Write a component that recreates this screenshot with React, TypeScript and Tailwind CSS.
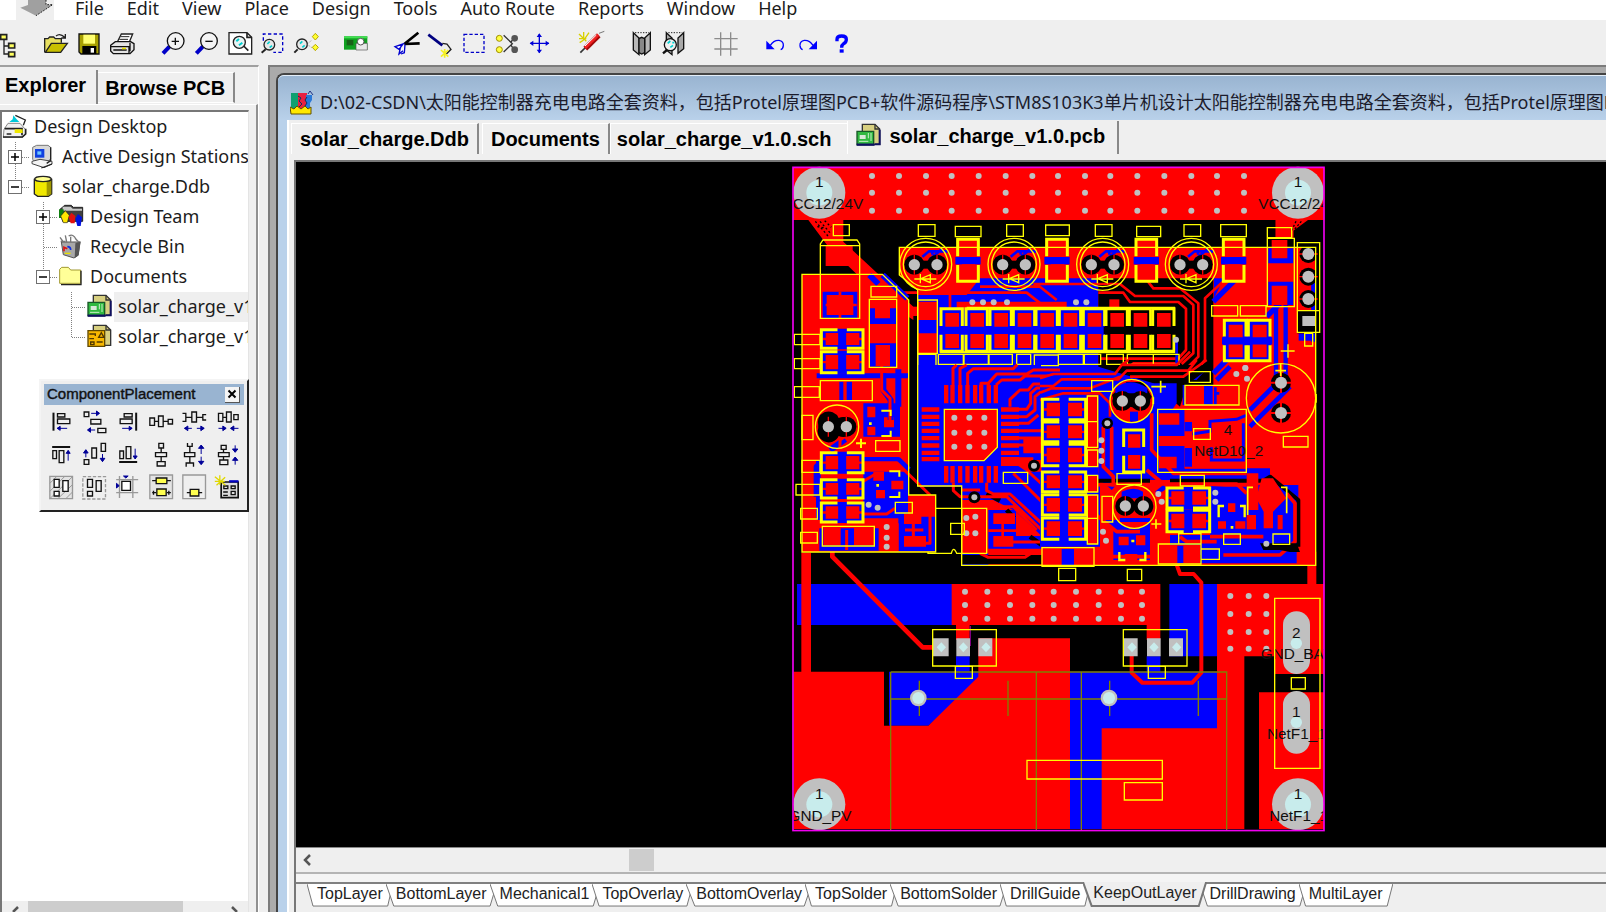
import type { ReactNode } from "react";

const RED = "#ff0000";
const BLUE = "#0000ff";
const YEL = "#ffff00";
const PAD = "#c0c0c0";
const HOLE = "#c8ecec";

const uiFont = "font-['Noto_Sans','Noto_Sans_CJK_SC',sans-serif]";
const boldFont = "font-['Liberation_Sans',Arial,sans-serif] font-bold";

/* ---------- menu + toolbar ---------- */

const menus = ["File", "Edit", "View", "Place", "Design", "Tools", "Auto Route", "Reports", "Window", "Help"];

const MenuBar = () => (
  <nav className={`flex h-5 shrink-0 items-start bg-white ${uiFont} text-[18px] leading-4 text-[#1c1c1c]`}>
    <div className="ml-4 h-5 w-[38px] bg-[#efefef]">
      <svg viewBox="48 0 114 60" className="h-5 w-[38px]">
        <path d="M84 0h54v14h20l-50 33-47-24 23-8z" fill="#a0a0a0" />
        <path d="M138 0v14h20l-50 33" fill="none" stroke="#222" strokeWidth="3" strokeDasharray="5 4" />
      </svg>
    </div>
    <div className="ml-2.5 flex gap-px">
      {menus.map((m) => (
        <button key={m} className="px-[11px] whitespace-nowrap">
          {m}
        </button>
      ))}
    </div>
  </nav>
);

type Tool = { name: string; box: string; art: ReactNode };

const lens = (cx: number, cy: number) => (
  <>
    <path d={`M${cx - 18} ${cy + 16}l-20 21`} stroke="#0000c8" strokeWidth="12" />
    <circle cx={cx} cy={cy} r="25" fill="#f4f4f4" stroke="#111" strokeWidth="4" />
  </>
);

const toolGroups: Tool[][] = [
  [
    {
      name: "Open",
      box: "117 84 99 90",
      art: (
        <>
          <path d="M134 156v-40h10l5-5h12l5 5h18v12" fill="#e8e060" stroke="#222" strokeWidth="4" />
          <path d="M136 157l18-27h48l-20 27z" fill="#c8c000" stroke="#222" strokeWidth="4" />
          <path d="M168 108q12-10 26 4m2-10v12h-12" fill="none" stroke="#222" strokeWidth="4" />
        </>
      ),
    },
    {
      name: "Save",
      box: "216 84 99 90",
      art: (
        <>
          <path d="M237 102h60v60h-54l-6-6z" fill="#a8a000" stroke="#111" strokeWidth="4" />
          <path d="M250 104h35v27h-35z" fill="#ffff70" />
          <path d="M247 138h42v24h-42z" fill="#000" />
          <path d="M272 144h10v14h-10z" fill="#fff" />
        </>
      ),
    },
    {
      name: "Print",
      box: "315 84 99 90",
      art: (
        <>
          <path d="M352 126l12-24h34l-10 24z" fill="#fff" stroke="#222" strokeWidth="4" />
          <path d="M362 110h26M358 118h26" stroke="#222" strokeWidth="3" />
          <path d="M332 136l14-11h46l10 6v18l-12 12h-50l-8-8z" fill="#e4e4e4" stroke="#111" strokeWidth="4" />
          <path d="M333 140h54v20M340 150h40M390 128v26" fill="none" stroke="#111" strokeWidth="4" />
          <path d="M366 143h12v5h-12z" fill="#e8e000" />
        </>
      ),
    },
  ],
  [
    { name: "Zoom In", box: "465 84 99 90", art: <>{lens(524, 123)}<path d="M512 124h22M523 113v22" stroke="#111" strokeWidth="4" /></> },
    { name: "Zoom Out", box: "564 84 99 90", art: <>{lens(624, 123)}<path d="M613 124h22" stroke="#111" strokeWidth="4" /></> },
    {
      name: "Fit Document",
      box: "663 84 99 90",
      art: (
        <>
          <path d="M684 98h54l14 14v50h-68z" fill="#fff" stroke="#222" strokeWidth="4" />
          <path d="M738 98v14h14M728 138l14 14" fill="none" stroke="#222" strokeWidth="5" />
          <circle cx="715" cy="127" r="18" fill="#e8f4f4" stroke="#222" strokeWidth="4" />
          <path d="M706 124l8-7M714 136l10-8" stroke="#00d0d0" strokeWidth="6" />
        </>
      ),
    },
    {
      name: "Zoom Area",
      box: "762 84 99 90",
      art: (
        <>
          <path d="M787 122v-20h58v55h-28" fill="none" stroke="#0000c8" strokeWidth="4" strokeDasharray="10 7" />
          <path d="M794 148l-12 10" stroke="#222" strokeWidth="6" />
          <circle cx="805" cy="134" r="16" fill="#e8e8e8" stroke="#222" strokeWidth="4" />
          <path d="M799 132l7-7M806 143l7-6" stroke="#00d0d0" strokeWidth="5" />
        </>
      ),
    },
    {
      name: "Zoom Point",
      box: "861 84 99 90",
      art: (
        <>
          <path d="M890 148l-10 10" stroke="#222" strokeWidth="6" />
          <circle cx="903" cy="133" r="16" fill="#e8e8e8" stroke="#222" strokeWidth="4" />
          <path d="M897 131l7-7M904 142l7-6" stroke="#00d0d0" strokeWidth="5" />
          <path d="M918 134l14-14M920 134l14 10" stroke="#777" strokeWidth="2" strokeDasharray="3 3" />
          <path d="M943 100l9 10-9 10-9-10zM943 133l9 9-9 10-9-10z" fill="#ffff30" stroke="#b8a800" strokeWidth="3" />
        </>
      ),
    },
  ],
  [
    {
      name: "Browse Board",
      box: "1017 84 99 90",
      art: (
        <>
          <path d="M1032 109h70v40h-70z" fill="#10a020" />
          <path d="M1032 109h70v6h-70z" fill="#40e050" />
          <path d="M1040 120h20v16h-20z" fill="#186018" />
          <path d="M1068 130h34v20h-34z" fill="#e8e8e8" stroke="#555" strokeWidth="2" />
          <circle cx="1082" cy="125" r="10" fill="#fff" stroke="#555" strokeWidth="3" />
        </>
      ),
    },
  ],
  [
    {
      name: "Cut",
      box: "1167 84 99 90",
      art: (
        <>
          <path d="M1252 98l-42 34M1256 130l-46 2" stroke="#000" strokeWidth="8" />
          <path d="M1206 132l-24 8 12 8zM1198 144l-4 18 12-10M1212 134l-2 24-10 4" fill="#fff" stroke="#0000d0" strokeWidth="4" />
        </>
      ),
    },
    {
      name: "Knife",
      box: "-24 84 99 90",
      art: (
        <>
          <path d="M-8 104l42 32" stroke="#000080" strokeWidth="8" />
          <path d="M34 130l14 2 12 16-14 14" fill="none" stroke="#222" strokeWidth="4" />
          <path d="M30 150l22 20M52 150l-22 20M41 147v26" stroke="#f4f020" strokeWidth="5" />
        </>
      ),
    },
    { name: "Select Area", box: "75 84 99 90", art: <path d="M99 103h60v54h-60z" fill="none" stroke="#0000c8" strokeWidth="4" strokeDasharray="10 6" /> },
    {
      name: "Deselect",
      box: "174 84 99 90",
      art: (
        <>
          <path d="M218 106l26 25-26 25M252 110l-12 16M252 152l-12-16" fill="none" stroke="#333" strokeWidth="4" />
          <circle cx="205" cy="115" r="9" fill="#ffff40" stroke="#a09000" strokeWidth="3" />
          <circle cx="205" cy="149" r="9" fill="#ffff40" stroke="#a09000" strokeWidth="3" />
          <circle cx="251" cy="115" r="10" fill="#555" />
          <circle cx="251" cy="149" r="10" fill="#555" />
        </>
      ),
    },
    {
      name: "Move",
      box: "273 84 99 90",
      art: (
        <>
          <path d="M298 130h56M325 102v56" stroke="#0000d8" strokeWidth="4" />
          <path d="M296 130l11-8v16zM355 130l-11-8v16zM325 100l8 11h-16zM325 160l8-11h-16z" fill="#0000d8" />
        </>
      ),
    },
  ],
  [
    {
      name: "Wizard",
      box: "426 84 99 90",
      art: (
        <>
          <path d="M448 158l20-20" stroke="#333" strokeWidth="5" />
          <path d="M463 146l40-40" stroke="#a00808" strokeWidth="16" />
          <path d="M462 144l40-40" stroke="#f02020" strokeWidth="9" />
          <path d="M462 138l34-33" stroke="#fff" strokeWidth="3" />
          <path d="M444 102l22 22M458 96v24M444 116h22M474 98l-14 20M446 128l12-8" stroke="#d8d000" strokeWidth="4" />
          <path d="M504 100l16-6" stroke="#777" strokeWidth="3" />
        </>
      ),
    },
  ],
  [
    {
      name: "Library",
      box: "579 84 99 90",
      art: (
        <>
          <path d="M607 98l17 16v50l-17-14zM658 98l-17 16v50l17-14z" fill="#b8b8b8" stroke="#111" strokeWidth="4" />
          <path d="M624 116l8-4 9 4v42l-9 4-8-4z" fill="#888" stroke="#111" strokeWidth="4" />
          <path d="M612 98h42" stroke="#222" strokeWidth="3" strokeDasharray="4 4" />
        </>
      ),
    },
    {
      name: "Browse Library",
      box: "678 84 99 90",
      art: (
        <>
          <path d="M706 98l17 16v50l-17-14zM758 98l-17 16v46l17-14z" fill="#a8a8a8" stroke="#111" strokeWidth="4" />
          <path d="M708 150l-12 10" stroke="#111" strokeWidth="7" />
          <circle cx="718" cy="134" r="18" fill="#f0f0f0" stroke="#111" strokeWidth="4" />
          <path d="M710 130l8-7M718 142l8-6M724 128h6" stroke="#00d0d0" strokeWidth="5" />
          <path d="M712 98h42" stroke="#222" strokeWidth="3" strokeDasharray="4 4" />
        </>
      ),
    },
  ],
  [{ name: "Snap Grid", box: "831 84 99 90", art: <path d="M850 116h70M850 147h70M869 97v70M899 97v70" stroke="#8c8c8c" strokeWidth="4" /> }],
  [
    {
      name: "Undo",
      box: "990 84 99 90",
      art: (
        <>
          <path d="M1024 136q10-16 26-15 14 2 13 16-1 10-8 12" fill="none" stroke="#0000ff" strokeWidth="4" />
          <path d="M1012 122v26h25z" fill="#0000ff" />
        </>
      ),
    },
    {
      name: "Redo",
      box: "1089 84 99 90",
      art: (
        <>
          <path d="M1152 136q-10-16-26-15-14 2-13 16 1 10 8 12" fill="none" stroke="#0000ff" strokeWidth="4" />
          <path d="M1164 122v26h-25z" fill="#0000ff" />
        </>
      ),
    },
    {
      name: "Help",
      box: "1188 84 99 90",
      art: (
        <>
          <path d="M1224 124v-6q0-10 14-10t14 10-8 13q-6 4-6 12" fill="none" stroke="#0000ff" strokeWidth="10" />
          <path d="M1232 148h12v10h-12z" fill="#0000ff" />
        </>
      ),
    },
  ],
];

const ToolBar = () => (
  <div className="flex h-[45px] shrink-0 items-center gap-[18px] bg-[#efefef]">
    <button aria-label="Design Manager" className="-mr-1">
      <svg viewBox="0 84 75 90" className="h-[30px] w-[25px]">
        <path d="M12 118v44h14M12 138h14" fill="none" stroke="#222" strokeWidth="4" />
        <path d="M2 104h18v14h-18zM26 130h18v14h-18zM26 156h18v14h-18z" fill="#ffff60" stroke="#222" strokeWidth="5" />
      </svg>
    </button>
    {toolGroups.map((g) => (
      <div key={g[0].name} className="flex">
        {g.map((t) => (
          <button key={t.name} aria-label={t.name} title={t.name}>
            <svg viewBox={t.box} className="h-[30px] w-[33px]">{t.art}</svg>
          </button>
        ))}
      </div>
    ))}
  </div>
);

/* ---------- explorer ---------- */

const PcbDoc = () => (
  <svg viewBox="258 696 84 90" className="h-[30px] w-7">
    <path d="M280 706h38l14 14v46h-52z" fill="#d8d080" stroke="#333" strokeWidth="4" />
    <path d="M318 706v14h14" fill="none" stroke="#333" strokeWidth="4" />
    <path d="M332 722v44h-14" fill="none" stroke="#101060" strokeWidth="6" />
    <path d="M264 727h50v40h-50z" fill="#30b840" stroke="#185828" strokeWidth="4" />
    <path d="M272 738h18v12h-18z" fill="#d8e8d8" />
    <path d="M298 732v16M306 732v24M270 757h28" fill="none" stroke="#c8f0c8" strokeWidth="3" />
    <path d="M263 767h54" stroke="#101060" strokeWidth="7" />
  </svg>
);

const SchDoc = () => (
  <svg viewBox="258 786 84 90" className="h-[30px] w-7">
    <path d="M280 796h38l14 14v46h-52z" fill="#d8d080" stroke="#333" strokeWidth="4" />
    <path d="M318 796v14h14" fill="none" stroke="#333" strokeWidth="4" />
    <path d="M264 812h50v47h-50z" fill="#f8b800" stroke="#604800" strokeWidth="4" />
    <path d="M268 822h18v6M268 836h14M296 832l8-14 8 14zM272 846h10v8h-10zM290 846h18" fill="none" stroke="#503800" strokeWidth="4" />
  </svg>
);

const DesktopIcon = () => (
  <svg viewBox="6 156 84 90" className="h-[30px] w-7">
    <path d="M12 208l12-18h36l16 18v16l-8 8H10z" fill="#f0f0f0" stroke="#888" strokeWidth="3" />
    <path d="M9 231h58l10-9v-16M14 206h52v20M20 222h14" fill="none" stroke="#222" strokeWidth="5" />
    <path d="M44 208h24v11h-24z" fill="#f0e800" />
    <path d="M28 186l10-8 2-12 10 12 8 8z" fill="#00c8d8" />
    <path d="M46 166l30 14-6 16" fill="none" stroke="#222" strokeWidth="4" />
  </svg>
);

const StationIcon = () => (
  <svg viewBox="90 246 84 90" className="h-[30px] w-7">
    <path d="M98 262l12-6h34l8 6v34l-10 10h-36l-8-8z" fill="#d8d8d8" stroke="#777" strokeWidth="3" />
    <path d="M105 267h28v26h-28z" fill="#1040e0" />
    <path d="M112 274h12v10h-12z" fill="#70c8ff" />
    <path d="M96 304l24-6 36 6v8l-24 11-36-12z" fill="#f4f4f4" stroke="#444" strokeWidth="3" />
    <path d="M152 262v40l-12 8M124 324l32-12" fill="none" stroke="#222" strokeWidth="4" />
  </svg>
);

const DbIcon = () => (
  <svg viewBox="90 336 84 90" className="h-[30px] w-7">
    <path d="M103 358v44l10 7h32l10-7v-44z" fill="#f0e800" stroke="#222" strokeWidth="4" />
    <path d="M140 360h14v42l-10 6h-4z" fill="#a09800" />
    <ellipse cx="129" cy="357" rx="25" ry="8" fill="#ffff90" stroke="#222" strokeWidth="4" />
  </svg>
);

const TeamIcon = () => (
  <svg viewBox="174 426 84 90" className="h-[30px] w-7">
    <path d="M180 448l14-12h20l6 6h28v42h-60z" fill="#404040" stroke="#222" strokeWidth="3" />
    <path d="M188 440h24l6 6h28v6h-58z" fill="#c8c8c8" />
    <path d="M177 448h14v26h-14z" fill="#108010" />
    <path d="M182 468l14-16 12 14-6 22h-12z" fill="#ffe800" stroke="#222" strokeWidth="2" />
    <path d="M206 472l8-14 12 10-2 22h-12z" fill="#e01010" />
    <path d="M226 476l8-14 12 10-4 26h-10z" fill="#0010e0" />
  </svg>
);

const BinIcon = () => (
  <svg viewBox="174 516 84 90" className="h-[30px] w-7">
    <path d="M184 546h56l-6 40-12 8-32-10z" fill="#a8a8a8" stroke="#555" strokeWidth="3" />
    <path d="M226 550l16-6-6 42-12 8z" fill="#555" />
    <path d="M180 532l10 14M196 526l4 20M206 528q14-8 22 10l8 8M212 530v16M182 544h14" stroke="#777" strokeWidth="4" fill="#f4f4f4" />
    <path d="M192 574v-12l10 4" fill="none" stroke="#e01010" strokeWidth="5" />
    <path d="M202 560q10 0 10 10" fill="none" stroke="#1030e0" strokeWidth="5" />
    <path d="M194 580h18" stroke="#e8e000" strokeWidth="4" />
  </svg>
);

const FolderIcon = () => (
  <svg viewBox="174 606 84 90" className="h-[30px] w-7">
    <path d="M179 670v-42l6-6h20l7 8h30v40z" fill="#ffff98" stroke="#a09830" strokeWidth="3" />
    <path d="M183 674h60v-42" fill="none" stroke="#222" strokeWidth="4" />
  </svg>
);

type Line = "none" | "through" | "end";
type Node = { label: string; cells: Line[]; open?: boolean; icon: ReactNode; selected?: boolean };

const nodes: Node[] = [
  { label: "Design Desktop", cells: [], icon: <DesktopIcon /> },
  { label: "Active Design Stations", cells: ["through"], open: false, icon: <StationIcon /> },
  { label: "solar_charge.Ddb", cells: ["end"], open: true, icon: <DbIcon /> },
  { label: "Design Team", cells: ["none", "through"], open: false, icon: <TeamIcon /> },
  { label: "Recycle Bin", cells: ["none", "through"], icon: <BinIcon /> },
  { label: "Documents", cells: ["none", "end"], open: true, icon: <FolderIcon /> },
  { label: "solar_charge_v1.0.pcb", cells: ["none", "none", "through"], icon: <PcbDoc />, selected: true },
  { label: "solar_charge_v1.0.sch", cells: ["none", "none", "end"], icon: <SchDoc /> },
];

const TreeRow = ({ node }: { node: Node }) => (
  <li className="flex h-[30px] items-center">
    {node.cells.map((line, i) => {
      const last = i === node.cells.length - 1;
      return (
        <span key={i} className="relative flex h-[30px] w-7 shrink-0 items-center pl-1.5">
          {line !== "none" && (
            <svg viewBox="0 0 28 30" className="absolute inset-0 h-[30px] w-7">
              <path
                d={line === "through" ? "M13.5 0V30M14 15.500H28" : "M13.5 0V15M14 15.500H28"}
                fill="none"
                stroke="#808080"
                strokeDasharray="1 1"
              />
            </svg>
          )}
          {last && node.open !== undefined && (
            <button
              aria-label={node.open ? "Collapse" : "Expand"}
              className="relative size-[14px] border border-[#707070] bg-white"
            >
              <svg viewBox="0 0 12 12" className="size-3">
                <path d={node.open ? "M2 6h8" : "M2 6h8M6 2v8"} stroke="#000" strokeWidth="1.500" />
              </svg>
            </button>
          )}
        </span>
      );
    })}
    <span className="shrink-0">{node.icon}</span>
    <span className={`h-[30px] grow overflow-hidden whitespace-nowrap pl-1 leading-[28px] ${node.selected ? "bg-[#efefef]" : ""}`}>
      {node.label}
    </span>
  </li>
);

/* component placement palette, 6 x 3 */
const K = { fill: "none", stroke: "#111", strokeWidth: 4 };
const A = { fill: "#000098", stroke: "#000098", strokeWidth: 3 };

const placement: [string, ReactNode][] = [
  ["Align Left", <><path d="M163 164v54" stroke="#111" strokeWidth="6" /><path {...K} d="M175 167h22v10h-22zM175 183h37v14h-37z" /><path {...A} d="M174 211h30M174 211l9-6v12z" /></>],
  ["Center Horizontal", <><path {...K} d="M255 162h14v14h-14zM275 184h30v14h-30zM296 211h24v13h-24z" /><path {...A} d="M276 166h24M301 166l-9-7v14zM266 216h22M265 216l9-7v14z" /></>],
  ["Align Right", <><path d="M408 164v54" stroke="#111" strokeWidth="6" /><path {...K} d="M372 167h24v10h-24zM360 183h36v14h-36z" /><path {...A} d="M366 211h28M396 211l-9-6v12z" /></>],
  ["Space Horizontal", <path key="a" {...K} d="M449 180h14v22h-14zM475 174h14v32h-14zM504 184h13v14h-13zM463 190h12M489 190h15" />],
  ["Increase Horizontal", <><path {...K} d="M547 166h10v24h-10M575 162h14v30h-14zM618 170h-10v16h10M557 178h18M589 178h19" /><path {...A} d="M553 211h22M553 211l10-7v14zM590 211h22M612 211l-10-7v14z" /></>],
  ["Decrease Horizontal", <><path {...K} d="M652 166h13v24h-13zM676 162h14v30h-14zM698 170h13v15h-13zM665 178h11" /><path {...A} d="M652 211h22M675 211l-10-7v14zM690 211h22M688 211l10-7v14z" /></>],
  ["Align Top", <><path d="M159 267h54" stroke="#111" strokeWidth="6" /><path {...K} d="M161 278h11v24h-11zM180 278h14v36h-14z" /><path {...A} d="M207 308v-28M207 277l-6 9h12z" /></>],
  ["Center Vertical", <><path {...K} d="M255 305h14v14h-14zM278 270h14v30h-14zM306 256h13v24h-13z" /><path {...A} d="M260 298v-22M260 275l-7 10h14zM310 288v22M310 311l-7-10h14z" /></>],
  ["Align Bottom", <><path d="M357 312h54" stroke="#111" strokeWidth="6" /><path {...K} d="M359 279h11v23h-11zM378 266h14v36h-14z" /><path {...A} d="M405 272v28M405 303l-6-9h12z" /></>],
  ["Space Vertical", <path key="a" {...K} d="M476 256h14v14h-14zM466 284h33v12h-33zM471 311h24v13h-24zM483 270v14M483 296v15" />],
  ["Increase Vertical", <><path {...K} d="M562 255v10h14v-10M553 284h31v12h-31zM558 326v-11h22v11M569 265v19M569 296v19" /><path {...A} d="M603 288v-24M603 261l-8 10h16zM603 296v22M603 320l-8-10h16z" /></>],
  ["Decrease Vertical", <><path {...K} d="M660 262h15v12h-15zM652 284h32v12h-32zM656 306h24v14h-24zM667 274v10M667 296v10" /><path {...A} d="M702 262v18M702 283l-8-10h16zM702 320v-20M702 297l-8 10h16z" /></>],
  ["Arrange Within Room", <><path d="M152 355h68v67h-68z" fill="#e4e4e4" stroke="#999" strokeWidth="4" /><path d="M152 376l20-20M152 400l44-44M152 422l68-66M176 422l44-42M200 422l20-20" stroke="#999" strokeWidth="3" /><path {...K} fill="#fff" d="M165 364h15v24h-15zM191 368h16v32h-16zM165 400h15v14h-15z" /></>],
  ["Arrange Within Rectangle", <><path d="M251 356h68v67h-68z" fill="none" stroke="#999" strokeWidth="4" strokeDasharray="10 5" /><path {...K} d="M265 364h15v24h-15zM291 368h15v32h-15zM265 400h15v14h-15z" /></>],
  ["Move To Grid", <><path d="M348 365h66M348 404h66M358 354v66M398 354v66" stroke="#999" strokeWidth="4" /><path {...K} fill="#fff" d="M365 370h26v27h-26z" /><path {...A} d="M370 354h14l-7 6zM349 376v14l8-7z" /></>],
  ["Create Union", <><path d="M449 351h68v71h-68z" fill="#e4e4e4" stroke="#999" strokeWidth="4" /><path d="M456 368h12M500 368h12M456 404h12M500 404h12M460 398v12M506 398v12" stroke="#111" strokeWidth="4" /><path d="M468 360h32v17h-32zM470 393h28v20h-28z" fill="#ffff50" stroke="#111" strokeWidth="4" /></>],
  ["Break Union", <><path d="M548 351h68v71h-68z" fill="#efefef" stroke="#999" strokeWidth="4" /><path d="M560 404h12M594 404h12" stroke="#111" strokeWidth="4" /><path d="M570 394h26v20h-26z" fill="#ffff50" stroke="#111" strokeWidth="4" /></>],
  ["Alignment Options", <><path d="M660 372h51v47h-51z" fill="#ddd" stroke="#111" strokeWidth="5" /><path d="M684 370h28" stroke="#0000c0" strokeWidth="7" /><path {...K} d="M668 384h12v8h-12zM690 384h12v8h-12zM690 400h12v10h-12zM666 402h14M666 412h14" /><path d="M641 356l32 26M656 352v28M641 370h30M672 358l-26 24" stroke="#e0d800" strokeWidth="4" /></>],
];

const PlacementPalette = () => (
  <div className="absolute top-[312px] left-[39px] w-[210px] border-2 border-t-[#f4f4f4] border-r-[#222] border-b-[#222] border-l-[#f4f4f4] bg-[#efefef] p-[3px] pb-1.5">
    <div className="flex h-[21px] items-center justify-between bg-[#99b4d1] pr-1 pl-[3px] font-['Liberation_Sans',Arial,sans-serif] text-[15px] text-[#111] [-webkit-text-stroke:0.4px_#111]">
      <span>ComponentPlacement</span>
      <button aria-label="Close" className="flex h-4 w-[15px] items-center justify-center border-r border-b border-[#555] bg-[#f4f4f4]">
        <svg viewBox="0 0 10 10" className="size-[10px]">
          <path d="M1.500 1.500l7 7M8.500 1.500l-7 7" stroke="#000" strokeWidth="2" />
        </svg>
      </button>
    </div>
    <div className="grid grid-cols-6">
      {placement.map(([name, art], i) => (
        <button key={name} aria-label={name} title={name}>
          <svg viewBox={`${135 + 99 * (i % 6)} ${141 + 99 * Math.floor(i / 6)} 99 99`} className="h-[33px] w-full">
            {art}
          </svg>
        </button>
      ))}
    </div>
  </div>
);

const Explorer = () => (
  <aside className="relative flex w-[259px] shrink-0 flex-col border-t-2 border-r border-t-[#a0a0a0] border-r-white bg-[#efefef]">
    <div className={`flex h-[37px] items-start pt-[3px] text-[20px] ${boldFont}`}>
      <button className="h-[34px] border-r-2 border-[#888] pr-2.5 pl-[5px] pb-1">Explorer</button>
      <button className="mt-0.5 h-[31px] border-t border-r-2 border-b border-t-white border-r-[#888] border-b-white pr-2 pl-[7px]">Browse PCB</button>
    </div>
    <div className="flex min-h-0 grow flex-col border-t border-r-2 border-t-white border-r-[#909090] pt-[5px] pr-[7px]">
      <div className="flex min-h-0 grow flex-col overflow-hidden border-t-2 border-r border-l-2 border-t-[#777] border-r-[#e4e4e4] border-l-[#777] bg-white">
        <ul className={`grow ${uiFont} text-[18px] text-[#1c1c1c]`}>
          {nodes.map((n) => (
            <TreeRow key={n.label} node={n} />
          ))}
        </ul>
        <div className="flex h-[11px] shrink-0 items-start justify-between bg-[#efefef] px-[7px]">
          <svg viewBox="0 0 10 11" className="h-[11px] w-[10px]"><path d="M9 6L4 11" stroke="#555" strokeWidth="2.500" /></svg>
          <div className="mr-[48px] ml-[9px] h-[11px] grow bg-[#cdcdcd]" />
          <svg viewBox="0 0 10 11" className="h-[11px] w-[10px]"><path d="M1 6l5 5" stroke="#555" strokeWidth="2.500" /></svg>
        </div>
      </div>
    </div>
    <PlacementPalette />
  </aside>
);

/* ---------- board drawing, 3 units to a screen pixel ---------- */

type Box = [number, number, number, number]; // x1 y1 x2 y2

const Boxes = ({ list, fill = "none", stroke = "none", sw = 4 }: { list: Box[]; fill?: string; stroke?: string; sw?: number }) => (
  <path
    d={list.map(([a, b, c, d]) => `M${a} ${b}H${c}V${d}H${a}z`).join("")}
    fill={fill}
    stroke={stroke}
    strokeWidth={sw}
  />
);

const Traces = ({ d, color = RED, w = 9 }: { d: string; color?: string; w?: number }) => (
  <path d={d} fill="none" stroke={color} strokeWidth={w} strokeLinejoin="round" />
);

const Dots = ({ xs, ys, r = 9 }: { xs: number[]; ys: number[]; r?: number }) => (
  <>
    {ys.flatMap((y) => xs.map((x) => <circle key={`${x}-${y}`} cx={x} cy={y} r={r} fill={PAD} />))}
  </>
);

const Vias = ({ pts }: { pts: [number, number][] }) => (
  <>{pts.map(([x, y]) => <circle key={`${x}-${y}`} cx={x} cy={y} r="9" fill={PAD} />)}</>
);

// chip resistor with its pads one above the other
const VChip = ({ b: [x1, y1, x2, y2], bg = BLUE, mid = BLUE }: { b: Box; bg?: string; mid?: string }) => {
  const m = (y1 + y2) / 2;
  return (
    <>
      <Boxes list={[[x1, y1, x2, y2]]} fill={bg} />
      <Boxes list={[[x1 - 4, m - 10, x2 + 4, m + 12]]} fill={mid} />
      <Boxes list={[[x1 + 16, y1 + 16, x2 - 13, m - 10], [x1 + 16, m + 12, x2 - 13, y2 - 13]]} fill={RED} />
      <path
        d={`M${x1 + 3} ${m - 12}V${y1 + 3}H${x2 - 3}V${m - 12}M${x1 + 3} ${m + 14}V${y2 - 3}H${x2 - 3}V${m + 14}`}
        fill="none"
        stroke={YEL}
        strokeWidth="9"
      />
    </>
  );
};

// chip resistor with its pads side by side
const HChip = ({ b: [x1, y1, x2, y2] }: { b: Box }) => {
  const m = (x1 + x2) / 2;
  return (
    <>
      <Boxes list={[[x1, y1, x2, y2]]} fill={BLUE} />
      <Boxes list={[[x1 + 16, y1 + 13, m - 12, y2 - 13], [m + 12, y1 + 13, x2 - 14, y2 - 13]]} fill={RED} />
      <Boxes list={[[x1 + 8, m, x1 + 8, m]]} />
      <path d={`M${x1 + 8} ${(y1 + y2) / 2}h14M${x2 - 22} ${(y1 + y2) / 2}h16`} stroke={RED} strokeWidth="7" />
      <path
        d={`M${m - 14} ${y1 + 3}H${x1 + 3}V${y2 - 3}H${m - 14}M${m + 14} ${y1 + 3}H${x2 - 3}V${y2 - 3}H${m + 14}`}
        fill="none"
        stroke={YEL}
        strokeWidth="9"
      />
    </>
  );
};

const PinPair = ({ x, y, d, r = 17 }: { x: number; y: number; d: number; r?: number }) => (
  <>
    <path d={`M${x - d} ${y}H${x + d}`} stroke="#000" strokeWidth="24" />
    {[x - d, x + d].map((cx) => (
      <g key={cx}>
        <circle cx={cx} cy={y} r={r + 13} fill="#000" />
        <path d={`M${cx} ${y - 30}v60`} stroke={RED} strokeWidth="4" />
        <circle cx={cx} cy={y} r={r} fill={PAD} />
      </g>
    ))}
  </>
);

const Led = ({ x }: { x: number }) => (
  <>
    <path d={`M${x - 10} 290l20-16h56M${x + 20} 284v-10M${x + 10} 300l40-34`} fill="none" stroke={BLUE} strokeWidth="8" />
    <PinPair x={x} y={314} d={34} />
    <circle cx={x} cy="313" r="78" fill="none" stroke={YEL} strokeWidth="4" />
    <circle cx={x} cy="313" r="67" fill="none" stroke={YEL} strokeWidth="4" />
    <path d={`M${x - 34} 357h66M${x - 16} 342v28M${x - 14} 356l28-12v24z`} fill="none" stroke={YEL} strokeWidth="4" />
    <Boxes list={[[x - 22, 194, x + 28, 229]]} stroke={YEL} />
  </>
);

const MountPad = ({ x, y, net, shift = 2 }: { x: number; y: number; net: string; shift?: number }) => (
  <>
    <circle cx={x} cy={y} r="78" fill={PAD} />
    <circle cx={x} cy={y} r="39" fill={HOLE} />
    <NetText x={x} y={y - 16} text="1" />
    <NetText x={x + shift} y={y + 49} text={net} />
  </>
);

const NetText = ({ x, y, text }: { x: number; y: number; text: string }) => (
  <text x={x} y={y} textAnchor="middle" fontSize="46" fill="#101010" fontFamily="'Liberation Sans', Arial, sans-serif">
    {text}
  </text>
);

const Header = ({ x, second }: { x: number; second?: boolean }) => (
  <>
    <Boxes list={[[x, 1435, x + (second ? 43 : 48), 1489], [x + 71, 1435, x + 112, 1489], [x + 137, 1435, x + 179, 1489]]} fill={PAD} />
    {[26, 92, 160].map((o) => (
      <path key={o} d={`M${x + o} 1447l14 15-14 15-14-15z`} fill={HOLE} />
    ))}
    <Boxes list={[[x, 1409, x + 191, 1518], [x + (second ? 75 : 68), 1519, x + (second ? 126 : 119), 1555]]} stroke={YEL} />
  </>
);

const PowerSection = () => (
  <>
    <Boxes list={[[51, 1272, 516, 1395], [1168, 1272, 1312, 1489], [528, 1489, 569, 1540], [1100, 1489, 1141, 1540], [870, 1535, 1312, 2007]]} fill={BLUE} />
    <path d="M327 1535H600V1560L445 1697H327z" fill={BLUE} />
    <Boxes
      list={[
        [64, 1178, 93, 1540], [515, 1272, 1141, 1395], [528, 1395, 569, 1440], [1100, 1395, 1141, 1440],
        [1582, 1175, 1609, 1280], [965, 1705, 1312, 2007], [1311, 1272, 1393, 2007], [1390, 1272, 1632, 1489],
        [1484, 1480, 1632, 1542], [1437, 1597, 1632, 2007],
      ]}
      fill={RED}
    />
    <path d="M41 1535H312V1697H445L595 1550V1435H870V2007H41z" fill={RED} />
    <Traces d="M157 1170V1190L428 1462H465" w={14} />
    <Traces d="M1185 1200L1200 1242H1241L1264 1268V1538L1237 1568H1087L1055 1538V1485" w={12} />
    <path d="M571 1398v60" stroke="#800080" strokeWidth="4" />
    <path d="M332 1536H1340V2010M332 1536V2010M332 1617H1340M769 1536V2010M904 1536V2010M418 1562v106M684 1562v106M989 1562v106M1255 1562v106" fill="none" stroke="#808000" strokeWidth="4" />
    <Dots xs={[555, 622, 690, 757, 821, 888, 956, 1023, 1086]} ys={[1295, 1335, 1376]} />
    <Dots xs={[1351, 1406, 1459]} ys={[1308, 1362, 1416, 1466]} />
    <Header x={458} />
    <Header x={1030} second />
    {[415, 987].map((x) => (
      <g key={x}>
        <circle cx={x} cy="1614" r="25" fill={PAD} />
        <circle cx={x} cy="1614" r="18" fill={HOLE} />
      </g>
    ))}
    {[[1354, 1450], [1593, 1687]].map(([y, hole]) => (
      <g key={y}>
        <rect x="1509" y={y} width="81" height="188" rx="40" fill={PAD} />
        <circle cx="1549" cy={hole} r="17" fill={HOLE} />
      </g>
    ))}
    <NetText x={1549} y={1434} text="2" />
    <NetText x={1549} y={1497} text="GND_BAT" />
    <NetText x={1549} y={1672} text="1" />
    <NetText x={1549} y={1736} text="NetF1_1" />
    <Boxes
      list={[
        [836, 1225, 887, 1262], [1042, 1228, 1085, 1262], [741, 1801, 1147, 1857], [1033, 1868, 1147, 1920],
        [1484, 1315, 1620, 1825], [1534, 1553, 1576, 1587],
      ]}
      stroke={YEL}
    />
  </>
);

const LeftZone = () => (
  <>
    <path d="M85 180H190V245L400 440V480L310 420L145 260z" fill={RED} />
    <path d="M106 184l38 44M120 184l30 34M134 182l20 20M112 200l24 4" stroke="#000" strokeWidth="4" strokeDasharray="6 7" />
    <path d="M66 343H307L386 420V1005H467V1176H66z" fill={RED} />
    <Boxes
      list={[
        [128, 395, 232, 475], [270, 445, 350, 492], [270, 550, 350, 620], [110, 640, 386, 655], [250, 730, 360, 830],
        [108, 900, 122, 1080], [250, 935, 384, 1075], [355, 1070, 465, 1174], [118, 1105, 300, 1172],
      ]}
      fill={BLUE}
    />
    <Boxes
      list={[
        [137, 257, 218, 318], [140, 405, 220, 465], [285, 422, 330, 475], [287, 555, 330, 618], [262, 740, 286, 772],
        [312, 772, 342, 802], [262, 800, 286, 826], [280, 935, 312, 962], [334, 962, 370, 988], [288, 990, 315, 1015],
        [385, 1005, 438, 1045], [372, 1062, 424, 1092], [372, 1128, 438, 1160], [296, 1090, 356, 1172],
        [130, 1102, 182, 1156], [222, 1102, 282, 1156],
      ]}
      fill={RED}
    />
    <Traces color={BLUE} w={18} d="M268 345L295 372M308 345L382 415M355 628V740M310 640V690L332 720V780M150 870L196 838M250 900H355L386 930M110 1010V920L130 900" />
    <Traces d="M305 600V690L330 715V790M180 870V840L200 826M250 908H350L450 1005V1150H420M200 1110V1170M252 1062H320L345 1045M400 1092V1130M250 964L290 940M300 990V1010M375 1110H430" />
    <path d="M137 435H230M180 395V478M121 680H260" stroke={RED} strokeWidth="8" />
    {([[121, 506, 252, 568], [121, 572, 252, 641], [121, 875, 252, 941], [121, 956, 252, 1017], [121, 1026, 252, 1089]] as Box[]).map((b) => (
      <HChip key={b[1]} b={b} />
    ))}
    <Boxes list={[[178, 665, 190, 720], [200, 665, 216, 720]]} fill={BLUE} />
    <path d="M116 800a30 30 0 0 1 60-26a30 30 0 1 1 0 54a30 30 0 0 1-60-28" fill="#000" />
    <PinPair x={172} y={800} d={27} />
    <circle cx="171" cy="800" r="65" fill="none" stroke={YEL} strokeWidth="4" />
    <path d="M228 850h30M243 836v28M304 752h28v16M304 828h28v-16M328 934h30v16M328 1011h30v-16" fill="none" stroke={YEL} strokeWidth="6" />
    <Boxes list={[[267, 787, 275, 795], [289, 972, 297, 980]]} fill={YEL} />
    <Vias pts={[[266, 1034], [293, 1043], [320, 1101], [320, 1133], [320, 1160]]} />
    <path d="M121 475V252l8-12h102l8 12V475zM121 257H239" fill="none" stroke={YEL} strokeWidth="4" />
    <path d="M66 343H307L386 420V1005H467V1176H66z" fill="none" stroke={YEL} strokeWidth="4" />
    <Boxes
      list={[
        [160, 194, 208, 227], [268, 418, 350, 622], [273, 379, 350, 411], [43, 523, 120, 554], [43, 596, 120, 626],
        [43, 680, 118, 712], [121, 662, 277, 722], [66, 766, 99, 839], [287, 842, 360, 874], [66, 901, 120, 937],
        [48, 973, 120, 1005], [62, 1045, 112, 1077], [62, 1117, 112, 1149], [127, 1099, 283, 1158], [346, 1027, 397, 1059],
      ]}
      stroke={YEL}
    />
  </>
);

const topChips = [480, 555, 627, 697, 765, 835, 907, 975, 1045, 1115];

const TopRow = () => (
  <>
    <path d="M358 262H1607V1216H545V978H413V390L358 345z" fill={RED} />
    <path d="M413 405H560L600 355H955V980H413z" fill={BLUE} />
    <path d="M955 355H1300V700H955z" fill="#000" />
    <path d="M1302 355h30l-30 60z" fill={BLUE} />
    <Boxes list={[[413, 425, 472, 580], [530, 425, 640, 450], [640, 425, 860, 445]]} fill={RED} />
    <Boxes list={[[415, 480, 470, 520], [415, 582, 470, 615]]} fill={BLUE} />
    <Boxes list={[[988, 418, 1018, 450]]} fill={RED} />
    <path d="M386 440h28v28h-28z" fill={RED} />
    <Traces w={8} d="M320 398H740L800 445M600 380H780L830 420M510 400V450M760 372H1020L1065 408H1210L1240 435V580L1205 612M955 398H1030L1050 426H1195L1218 446V570L1195 596H960M1100 360L1120 385H1200L1255 430V590L1225 620M1340 355L1275 415V600L1240 640M1190 610H1060L1020 650" />
    <path d="M1300 640L1400 540M1300 425L1370 355M1460 470L1500 430" stroke={BLUE} strokeWidth="16" />
    <path d="M1488 430V650M1517 430V660M1600 360V545" stroke={BLUE} strokeWidth="13" />
    {[437, 702, 968, 1234].map((x) => (
      <Led key={x} x={x} />
    ))}
    {[530, 797, 1065, 1327].map((x) => (
      <VChip key={x} b={[x, 235, x + 68, 367]} bg={RED} />
    ))}
    {topChips.map((x) => (
      <VChip key={x} b={[x, 443, x + 70, 577]} bg={x < 950 ? BLUE : "#000"} mid={x < 950 ? BLUE : "#000"} />
    ))}
    <path d="M480 577H1185M560 443H1185" stroke={YEL} strokeWidth="6" />
    <path d="M1190 545V620" stroke={BLUE} strokeWidth="8" />
    <Boxes list={[[1465, 265, 1540, 310], [1465, 365, 1540, 435]]} fill={BLUE} />
    <Boxes list={[[1487, 178, 1540, 235], [1475, 240, 1522, 295], [1475, 377, 1522, 435]]} fill={RED} />
    <path d="M1487 180H1584L1540 212V236H1487z" fill={RED} />
    <path d="M1548 184l-14 30M1564 184l-22 26" stroke="#000" strokeWidth="4" strokeDasharray="6 6" />
    <VChip b={[1330, 478, 1401, 605]} />
    <VChip b={[1402, 478, 1473, 605]} />
    <path d="M1556 520h50v22h-50z" fill={BLUE} />
    <Boxes list={[[1552, 452, 1620, 520]]} fill="#000" />
    {[282, 350, 417].map((y) => (
      <g key={y}>
        <circle cx="1585" cy={y} r="27" fill="#000" />
        <path d={`M1557 ${y}h56`} stroke={RED} strokeWidth="4" />
        <circle cx="1585" cy={y} r="18" fill={PAD} />
      </g>
    ))}
    <Boxes list={[[1567, 468, 1605, 498]]} fill={PAD} />
    <Vias pts={[[577, 427], [609, 427], [641, 427], [681, 427], [888, 427], [919, 427], [1188, 539], [1396, 624]]} />
    <Boxes
      list={[
        [526, 199, 603, 230], [797, 195, 868, 227], [1070, 199, 1142, 230], [1322, 194, 1399, 230], [413, 420, 472, 580],
        [413, 583, 468, 617], [475, 583, 550, 613], [552, 583, 625, 613], [627, 583, 697, 613], [710, 583, 752, 613],
        [763, 585, 835, 617], [835, 583, 910, 613], [913, 583, 962, 613], [980, 583, 1030, 613], [1042, 583, 1120, 613],
        [1120, 583, 1197, 613], [1462, 235, 1543, 440], [1462, 203, 1535, 233], [1552, 248, 1619, 517], [1552, 452, 1619, 517],
        [1574, 520, 1598, 558], [1295, 437, 1373, 468], [1381, 437, 1458, 468],
      ]}
      stroke={YEL}
    />
    <path d="M1502 573h42M1524 553v40" stroke={YEL} strokeWidth="4" />
  </>
);

const mcuH = [492, 511, 534, 556, 579, 597, 620, 641];
const mcuV = [142, 164, 185, 206, 228, 250, 272, 291];

const Mcu = () => (
  <g transform="translate(0 600)">
    <path d="M545 378h-132V15h370v600H545z" fill={BLUE} />
    <path d="M545 420H640L700 450H545zM545 450h80v130h-80zM708 455L785 528H708zM663 300H785V335H740L715 318H663zM625 566h160v50H625z" fill={RED} />
    <path d="M680 450l22 24M750 530l34 24M620 400l40 22" stroke="#000" strokeWidth="14" />
    <path d="M545 585h240v28H545z" fill="#000" />
    <Traces d="M519 75V25L530 15M540 75V25L560 15M563 75V40L580 26H700L712 14M603 75V70H625L650 42H740L760 30H840M648 75L665 60H720L735 48H840M625 90V70M690 140V118L720 90H745L760 72H840M717 148H740L752 130V100L770 84H840M717 170H740L765 150V110L790 90M717 190H745L775 165M717 212H785M717 234H785M717 255H740M520 368V392L540 410H575M620 368V392L640 402H690L785 490M600 410H680L785 510M740 330L785 372M700 340L785 425M640 440H700L770 510M717 296H760M545 390H600M660 546H785M600 580L625 592H735L760 575" />
    <Boxes list={[[730, 232, 784, 280], [640, 460, 705, 492], [640, 528, 700, 560]]} fill={RED} />
    <path d="M668 492v36M625 512h100" stroke={RED} strokeWidth="8" />
    <Boxes list={mcuH.flatMap((x): Box[] => [[x, 75, x + 13, 130], [x, 318, x + 13, 368]])} fill={RED} />
    <Boxes list={mcuV.flatMap((y): Box[] => [[425, y, 478, y + 13], [663, y, 717, y + 13]])} fill={RED} />
    <path d="M493 148H652V262L612 302H493z" fill={RED} stroke={YEL} strokeWidth="4" />
    <Dots xs={[523, 568, 613]} ys={[173, 218, 260]} />
    <circle cx="762" cy="317" r="18" fill="#000" />
    <circle cx="583" cy="412" r="18" fill="#000" />
    <Vias pts={[[762, 317], [583, 412], [559, 474], [586, 470], [559, 520], [586, 520]]} />
    <path d="M444 445H620V580H545V445V580H530q-10-24-16 0H444z" fill="none" stroke={YEL} strokeWidth="4" />
    <Boxes list={[[512, 490, 553, 523], [670, 337, 743, 370]]} stroke={YEL} />
  </g>
);

const stack: Box[] = [
  [-26, 115, 110, 182], [-26, 183, 110, 248], [-26, 250, 110, 320],
  [-26, 333, 110, 398], [-26, 401, 110, 468], [-26, 471, 110, 541],
];

const RightZone = () => (
  <g transform="translate(810 600)">
    <path d="M145 15L480 15L440 60H380V130L330 205H150L120 110H-30V55z" fill={BLUE} />
    <path d="M145 15H490L410 75L390 140L310 70L145 20z" fill="#000" />
    <Traces d="M-30 55L10 42H195L215 15M-30 78H10L35 58H205L230 32H415L440 0M-30 98L5 85H120L210 50M-30 120L40 100H150L180 130V180M235 0L215 15H380L420 -25M240 50H400L470 0" w={8} />
    <path d="M300 70H380V130L330 160L300 120z" fill={BLUE} />
    <Boxes list={[[145, 170, 325, 360], [300, 325, 660, 360], [-30, 340, 150, 560], [190, 480, 300, 600], [480, 380, 590, 600], [590, 375, 745, 560], [360, 525, 740, 610], [325, 150, 404, 330]]} fill={BLUE} />
    <Traces color={BLUE} w={14} d="M250 345H640L735 430V540L700 575M120 430L190 495H290M500 60L540 20M600 150L670 80V60M600 200L720 80M150 350L190 385M320 400L345 380M480 385L560 390" />
    <Traces color="#000" w={12} d="M105 362H300M360 362H640L660 350L745 420V560" />
    <Traces w={11} d="M160 200V320L190 350V380M185 200V330M305 160V270L370 340H590M290 330L340 372H560L590 400M480 530H640M520 585H690L735 545V430L710 400M110 375L270 372M120 450L200 515H270M390 530L410 545H500M130 590H300M270 460L350 500" />
    <Boxes list={[[110, 105, 145, 320], [112, 346, 145, 396], [112, 405, 145, 552], [300, 395, 350, 560], [150, 395, 200, 480], [404, 146, 590, 326], [327, 160, 388, 194], [327, 228, 404, 258], [327, 290, 380, 325], [590, 340, 625, 450]]} fill={RED} />
    <path d="M404 186H426V214H404zM404 264H426V320H404z" fill={BLUE} />
    <path d="M427 222L480 214V184L560 178L588 166M484 262V300H580V190" fill="none" stroke={BLUE} strokeWidth="9" />
    <path d="M635 355h34l40 60-40 40v50h-28v-50l-22-40z" fill={RED} />
    <Boxes list={[[683, 465, 698, 508], [590, 465, 618, 508], [534, 430, 556, 456], [504, 484, 528, 506], [556, 484, 586, 506], [206, 530, 236, 556], [258, 526, 286, 556], [224, 582, 262, 612]]} fill={RED} />
    <path d="M630 550h110l10 26H720l-30-6h-50zM390 584h62v20h-62z" fill="#000" />
    <path d="M400 75h168v60H400z" fill={RED} />
    <path d="M466 80h18v50h-18zM496 82v52M500 100h8M402 75v60" stroke={BLUE} strokeWidth="8" fill={BLUE} />
    {stack.map((b) => (
      <HChip key={b[1]} b={b} />
    ))}
    <VChip b={[218, 207, 284, 339]} />
    <HChip b={[348, 381, 482, 447]} />
    <HChip b={[348, 448, 482, 518]} />
    <Boxes list={[[-20, 565, 130, 617], [330, 555, 450, 611]]} fill={RED} />
    <Boxes list={[[35, 567, 72, 617], [382, 557, 400, 610]]} fill={BLUE} />
    <circle cx="245" cy="123" r="65" fill={RED} />
    <path d="M186 105L230 66H280L305 110L285 150L240 140L200 150z" fill="#000" />
    <path d="M196 84q44-34 96 0v16h-96z" fill={BLUE} />
    <path d="M240 155h24v30h-24z" fill={BLUE} />
    <PinPair x={244} y={123} d={27} />
    <circle cx="253" cy="440" r="65" fill={RED} />
    <path d="M215 395q38-18 64 0v20h-64zM210 474h90v12h-90z" fill={BLUE} />
    <PinPair x={253} y={438} d={27} />
    {[[68, 30], [159, 30]].map(([y, r]) => (
      <g key={y}>
        <circle cx="693" cy={y} r={r} fill="#000" />
        <path d={`M662 ${y}h62M693 ${y - 31}v62`} stroke={RED} strokeWidth="6" />
        <circle cx="693" cy={y} r="18" fill={PAD} />
      </g>
    ))}
    <circle cx="693" cy="115" r="104" fill="none" stroke={YEL} strokeWidth="4" />
    <circle cx="245" cy="123" r="65" fill="none" stroke={YEL} strokeWidth="4" />
    <circle cx="253" cy="440" r="65" fill="none" stroke={YEL} strokeWidth="4" />
    <path d="M304 80h44M332 62v36M304 492h30M318 478v28M676 32h32M692 12v36M798 102v26M310 112v20M593 465V382h16M693 382h17v78" fill="none" stroke={YEL} strokeWidth="5" />
    <path d="M208 576v24h18M286 576v24h-18M522 438h-16v34M570 438h14v34" fill="none" stroke={YEL} strokeWidth="7" />
    <Boxes list={[[244, 539, 253, 547], [542, 498, 550, 506]]} fill={YEL} />
    <circle cx="172" cy="190" r="17" fill="#000" />
    <Vias pts={[[586, 24], [559, 42], [591, 56], [172, 190], [154, 241], [154, 272], [154, 303], [325, 402], [335, 425], [496, 398], [496, 425], [159, 515], [168, 542], [649, 551]]} />
    <NetText x={534} y={226} text="4" />
    <NetText x={536} y={289} text="NetD10_2" />
    <Boxes
      list={[
        [125, 62, 188, 94], [418, 35, 481, 67], [405, 76, 567, 135], [323, 148, 589, 337], [431, 206, 481, 238],
        [700, 229, 774, 261], [112, 108, 143, 185], [112, 185, 143, 262], [112, 270, 143, 320], [112, 346, 143, 396],
        [112, 405, 143, 475], [112, 475, 143, 552], [201, 341, 274, 373], [391, 346, 463, 378], [156, 409, 188, 486],
        [-24, 563, 132, 619], [325, 552, 453, 612], [386, 521, 453, 552], [453, 567, 508, 598], [521, 522, 571, 553], [669, 522, 719, 553],
      ]}
      stroke={YEL}
    />
  </g>
);

const Board = () => (
  <svg viewBox="36 18 1599 1998" className="block h-[666px] w-[533px] shrink-0" role="img" aria-label="solar_charge_v1.0.pcb">
    <clipPath id="board">
      <path d="M36 18H1635V2015H36z" />
    </clipPath>
    <g clipPath="url(#board)">
      <Boxes list={[[39, 22, 1633, 180]]} fill={RED} />
      <Dots xs={[276, 357, 438, 515, 596, 677, 757, 834, 915, 991, 1072, 1153, 1234, 1311, 1392]} ys={[48, 98, 152]} />
      <PowerSection />
      <TopRow />
      <Mcu />
      <RightZone />
      <LeftZone />
      <path d="M358 262H1607V1216H545V978H413V390L358 345z" fill="none" stroke={YEL} strokeWidth="4" />
      <MountPad x={118} y={98} net="VCC12/24V" shift={10} />
      <MountPad x={1554} y={98} net="VCC12/24V" />
      <MountPad x={118} y={1933} net="GND_PV" />
      <MountPad x={1554} y={1933} net="NetF1_1" />
      <Boxes list={[[39, 22, 1632, 2012]]} stroke="#f000f0" sw={5} />
    </g>
  </svg>
);

/* ---------- document window ---------- */

const layers = [
  "TopLayer", "BottomLayer", "Mechanical1", "TopOverlay", "BottomOverlay", "TopSolder",
  "BottomSolder", "DrillGuide", "KeepOutLayer", "DrillDrawing", "MultiLayer",
];

const LayerTabs = () => (
  <div className="flex h-[30px] shrink-0 border-t-2 border-[#808080] bg-[#efefef] pl-[11px] font-['Liberation_Sans',Arial,sans-serif] text-[16px] leading-5 text-[#222]">
    {layers.map((l) => {
      const active = l === "KeepOutLayer";
      return (
        <button key={l} className={`relative -mr-[7px] px-[10px] pb-[3px] whitespace-nowrap ${active ? "z-10 -mt-0.5 h-[25px]" : "h-[23px]"}`}>
          <svg viewBox="0 0 100 24" preserveAspectRatio="none" className="absolute inset-0 size-full">
            <path
              d="M0 0L7 23H94L100 0"
              fill={active ? "#efefef" : "#fff"}
              stroke="#777"
              strokeWidth={active ? 2 : 1}
              vectorEffect="non-scaling-stroke"
            />
          </svg>
          <span className="relative">{l}</span>
        </button>
      );
    })}
  </div>
);

const AppIcon = () => (
  <svg viewBox="0 0 24 26" className="h-[26px] w-6 shrink-0">
    <path d="M1 3h8v17H1z" fill="#10a070" />
    <path d="M8 3h9v17H8z" fill="#e82040" />
    <path d="M16 5h6v5l-2 3v5h-4z" fill="#2878d8" />
    <path d="M8 6l3 2-2 3 3 3-3 3M17 7l-2 3 2 3-2 3" fill="none" stroke="#103060" />
    <path d="M0 17l4 2 3-3 4 3 4-3 3 3 3-2v7H1z" fill="#ffe800" stroke="#605000" />
    <path d="M18 4l2-3 3 4" fill="none" stroke="#203080" />
  </svg>
);

const docTab = "h-[31px] border-t border-r-2 border-l border-t-white border-r-[#888] border-l-white px-2 whitespace-nowrap";

const DocumentWindow = () => (
  <main className="ml-[9px] flex min-w-0 grow border-t-2 border-l-2 border-[#7c7c7c] bg-[#ababab] pt-1.5 pl-1.5">
    <section className="flex min-w-0 grow flex-col rounded-tl-lg border-t-2 border-l-2 border-[#444] bg-[#b9d1ea]">
      <header className={`flex h-[45px] shrink-0 items-center rounded-tl-md border-t border-[#e4eef8] bg-linear-to-b from-[#99b4d1] to-[#b9d1ea] pt-[9px] pl-3 ${uiFont} text-[18px] text-[#1c1c2c]`}>
        <AppIcon />
        <h1 className="ml-1.5 overflow-hidden whitespace-nowrap">
          D:\02-CSDN\太阳能控制器充电电路全套资料，包括Protel原理图PCB+软件源码程序\STM8S103K3单片机设计太阳能控制器充电电路全套资料，包括Protel原理图PCB+软件源码程序
        </h1>
      </header>
      <div className="ml-[9px] flex min-h-0 grow flex-col border-l-2 border-white bg-[#efefef]">
        <div className={`flex h-10 shrink-0 items-end pb-1.5 pl-0.5 text-[20px] ${boldFont}`}>
          <button className={`${docTab} mr-[3px]`}>solar_charge.Ddb</button>
          <button className={docTab}>Documents</button>
          <button className="h-[31px] border-t border-l border-white pr-4 pl-1.5 whitespace-nowrap">solar_charge_v1.0.sch</button>
          <button className="flex h-[33px] items-center gap-1.5 border-r-2 border-l border-r-[#888] border-l-white pr-3 pb-1 pl-[7px] whitespace-nowrap">
            <PcbDoc />
            solar_charge_v1.0.pcb
          </button>
        </div>
        <div className="ml-[5px] flex min-h-0 grow flex-col border-t-2 border-l-2 border-[#777]">
          <div className="min-h-0 grow overflow-hidden bg-black pt-1 pl-[496px]">
            <Board />
          </div>
          <div className="flex h-[27px] shrink-0 items-center border-t border-b-2 border-t-[#888] border-b-[#b4b4b4]">
            <button aria-label="Scroll left" className="ml-1.5">
              <svg viewBox="0 0 10 14" className="h-[14px] w-[10px]">
                <path d="M8 2L3 7l5 5" fill="none" stroke="#555" strokeWidth="2.500" />
              </svg>
            </button>
            <div className="ml-[317px] h-[22px] w-[25px] bg-[#cdcdcd]" />
          </div>
          <div className="h-2 shrink-0 bg-[#f4f4f4]" />
          <LayerTabs />
        </div>
      </div>
    </section>
  </main>
);

export default function App() {
  return (
    <div className="flex h-screen flex-col overflow-hidden bg-[#efefef] text-black">
      <MenuBar />
      <ToolBar />
      <div className="flex min-h-0 grow">
        <Explorer />
        <DocumentWindow />
      </div>
    </div>
  );
}
